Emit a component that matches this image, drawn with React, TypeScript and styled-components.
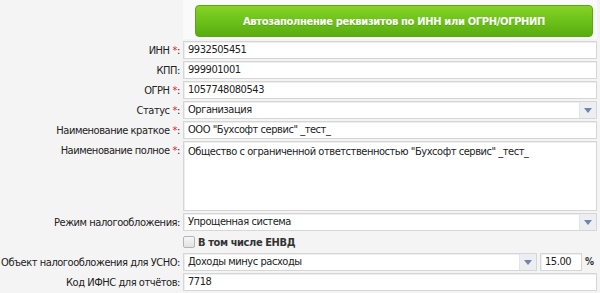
import React from 'react';
import styled, { createGlobalStyle } from 'styled-components';

const GlobalStyle = createGlobalStyle`
  html, body {
    margin: 0;
    padding: 0;
    background: #f4f4f4;
  }
  body {
    font-family: "DejaVu Sans Condensed", "DejaVu Sans", sans-serif;
    font-size: 11px;
    letter-spacing: -0.45px;
    color: #222222;
  }
`;

const Form = styled.div`
  width: 600px;
  height: 293px;
  display: flex;
  flex-direction: column;
  gap: 2px;
  overflow: hidden;
`;

const Row = styled.div<{ $height?: number }>`
  display: grid;
  grid-template-columns: 183px 414px;
  height: ${p => p.$height ?? 18}px;
  flex-shrink: 0;
`;

const ButtonCell = styled.div`
  grid-column: 2;
  padding: 5px 4px 2px 12px;
  background: #fafafa;
`;

const AutoButton = styled.button`
  width: 100%;
  height: 32px;
  border: 1px solid #5aa617;
  border-radius: 4px;
  background: linear-gradient(to bottom, #86d324 0%, #6cc11a 50%, #58ad0f 100%);
  color: #ffffff;
  font-family: "DejaVu Sans Condensed", "DejaVu Sans", sans-serif;
  font-size: 11px;
  font-weight: bold;
  letter-spacing: -0.3px;
  text-shadow: 0 1px 0 rgba(0, 0, 0, 0.15);
  cursor: pointer;
`;

const Label = styled.label<{ $top?: boolean }>`
  grid-column: 1;
  display: flex;
  justify-content: flex-end;
  align-items: ${p => (p.$top ? 'flex-start' : 'center')};
  padding-right: 3px;
  padding-top: ${p => (p.$top ? '3px' : '0')};
  white-space: nowrap;
  color: #222222;
`;

const Req = styled.span`
  color: #e0191b;
  margin-left: 3px;
`;

const Field = styled.div`
  grid-column: 2;
  display: flex;
  align-items: stretch;
  gap: 3px;
`;

const TextInput = styled.div<{ $width?: number }>`
  ${p => (p.$width ? `width: ${p.$width}px;` : 'flex: 1;')}
  box-sizing: border-box;
  height: 18px;
  line-height: 16px;
  padding: 0 4px;
  background: #ffffff;
  border: 1px solid #d6d6d6;
  box-shadow: inset 1px 1px 0 #eeeeee;
  white-space: nowrap;
  overflow: hidden;
`;

const TextArea = styled.div`
  flex: 1;
  box-sizing: border-box;
  padding: 3px 4px;
  line-height: 14px;
  background: #ffffff;
  border: 1px solid #d6d6d6;
  box-shadow: inset 1px 1px 0 #eeeeee;
`;

const Select = styled.div`
  flex: 1;
  display: flex;
  box-sizing: border-box;
  height: 18px;
  background: #ffffff;
  border: 1px solid #d6d6d6;
  box-shadow: inset 1px 1px 0 #eeeeee;
`;

const SelectValue = styled.span`
  flex: 1;
  line-height: 16px;
  padding: 0 4px;
  white-space: nowrap;
  overflow: hidden;
`;

const SelectArrow = styled.span`
  width: 16px;
  display: flex;
  align-items: center;
  justify-content: center;
  background: #eceef1;
  border-left: 1px solid #e2e4e8;

  &::after {
    content: '';
    border-left: 4px solid transparent;
    border-right: 4px solid transparent;
    border-top: 5px solid #6d87a8;
  }
`;

const Percent = styled.span`
  width: 12px;
  line-height: 18px;
  font-size: 10px;
  font-weight: bold;
  color: #333333;
`;

const CheckRow = styled.label`
  grid-column: 2;
  display: flex;
  align-items: center;
  gap: 3px;
  font-size: 11px;
  font-weight: bold;
  letter-spacing: -0.4px;
  color: #333333;
`;

const CheckBox = styled.span`
  width: 10px;
  height: 10px;
  border: 1px solid #b4b4b4;
  border-radius: 2px;
  background: linear-gradient(to bottom, #f6f6f6, #e2e2e2);
`;

const SelectField: React.FC<{ value: string }> = ({ value }) => (
  <Select>
    <SelectValue>{value}</SelectValue>
    <SelectArrow />
  </Select>
);

export default function App() {
  return (
    <>
      <GlobalStyle />
      <Form>
        <Row $height={39}>
          <ButtonCell>
            <AutoButton>Автозаполнение реквизитов по ИНН или ОГРН/ОГРНИП</AutoButton>
          </ButtonCell>
        </Row>

        <Row>
          <Label>ИНН<Req>*</Req>:</Label>
          <Field><TextInput>9932505451</TextInput></Field>
        </Row>

        <Row>
          <Label>КПП:</Label>
          <Field><TextInput>999901001</TextInput></Field>
        </Row>

        <Row>
          <Label>ОГРН<Req>*</Req>:</Label>
          <Field><TextInput>1057748080543</TextInput></Field>
        </Row>

        <Row>
          <Label>Статус<Req>*</Req>:</Label>
          <Field><SelectField value="Организация" /></Field>
        </Row>

        <Row>
          <Label>Наименование краткое<Req>*</Req>:</Label>
          <Field><TextInput>ООО "Бухсофт сервис" _тест_</TextInput></Field>
        </Row>

        <Row $height={70}>
          <Label $top>Наименование полное<Req>*</Req>:</Label>
          <Field>
            <TextArea>Общество с ограниченной ответственностью "Бухсофт сервис" _тест_</TextArea>
          </Field>
        </Row>

        <Row>
          <Label>Режим налогообложения:</Label>
          <Field><SelectField value="Упрощенная система" /></Field>
        </Row>

        <Row>
          <CheckRow>
            <CheckBox />
            В том числе ЕНВД
          </CheckRow>
        </Row>

        <Row>
          <Label>Объект налогообложения для УСНО:</Label>
          <Field>
            <SelectField value="Доходы минус расходы" />
            <TextInput $width={42}>15.00</TextInput>
            <Percent>%</Percent>
          </Field>
        </Row>

        <Row>
          <Label>Код ИФНС для отчётов:</Label>
          <Field><TextInput>7718</TextInput></Field>
        </Row>
      </Form>
    </>
  );
}
